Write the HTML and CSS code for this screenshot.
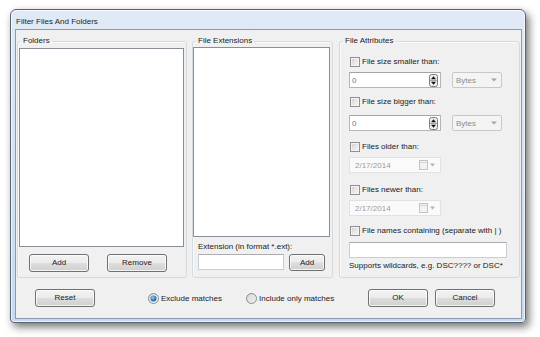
FILE: index.html
```html
<!DOCTYPE html>
<html>
<head>
<meta charset="utf-8">
<title>Filter Files And Folders</title>
<link rel="stylesheet" href="styles.css">
</head>
<body>
<div class="window">
  <div class="titlebar">Filter Files And Folders</div>
  <div class="client">
    <div class="groups">
      <fieldset class="group g-folders">
        <legend>Folders</legend>
        <div class="listbox lb-folders"></div>
        <div class="btnrow">
          <button class="btn b-add">Add</button>
          <button class="btn b-remove">Remove</button>
        </div>
      </fieldset>
      <fieldset class="group g-ext">
        <legend>File Extensions</legend>
        <div class="listbox lb-ext"></div>
        <div class="ext-label">Extension (in format *.ext):</div>
        <div class="ext-row">
          <div class="textbox tb-ext"></div>
          <button class="btn b-extadd">Add</button>
        </div>
      </fieldset>
      <fieldset class="group g-attr">
        <legend>File Attributes</legend>
        <div class="attr-body">
        <label class="check m9"><span class="cb"></span>File size smaller than:</label>
        <div class="size-row m4">
          <div class="numbox"><span class="numval">0</span>
            <svg class="spin" width="9" height="13" viewBox="0 0 9 13"><rect x="0.5" y="0.5" width="8" height="12" rx="2" fill="#ececec" stroke="#7c7c7c"/><line x1="1" y1="6.5" x2="8" y2="6.5" stroke="#a8a8a8"/><path d="M4.5 2.2 L7 5.2 H2 Z" fill="#111"/><path d="M2 7.8 H7 L4.5 10.8 Z" fill="#111"/></svg>
          </div>
          <div class="combo"><span>Bytes</span>
            <svg width="6" height="4" viewBox="0 0 6 4"><path d="M0 0.5 H6 L3 3.5 Z" fill="#a4a4a4"/></svg>
          </div>
        </div>
        <label class="check m8"><span class="cb"></span>File size bigger than:</label>
        <div class="size-row m7">
          <div class="numbox"><span class="numval">0</span>
            <svg class="spin" width="9" height="13" viewBox="0 0 9 13"><rect x="0.5" y="0.5" width="8" height="12" rx="2" fill="#ececec" stroke="#7c7c7c"/><line x1="1" y1="6.5" x2="8" y2="6.5" stroke="#a8a8a8"/><path d="M4.5 2.2 L7 5.2 H2 Z" fill="#111"/><path d="M2 7.8 H7 L4.5 10.8 Z" fill="#111"/></svg>
          </div>
          <div class="combo"><span>Bytes</span>
            <svg width="6" height="4" viewBox="0 0 6 4"><path d="M0 0.5 H6 L3 3.5 Z" fill="#a4a4a4"/></svg>
          </div>
        </div>
        <label class="check m10"><span class="cb"></span>Files older than:</label>
        <div class="datebox m4"><span>2/17/2014</span>
          <svg width="17" height="10" viewBox="0 0 17 10"><rect x="0.5" y="0.5" width="8" height="9" fill="#f2f2f2" stroke="#c4c4c4"/><line x1="1" y1="2.5" x2="8" y2="2.5" stroke="#d6d6d6"/><path d="M11 3.5 H16 L13.5 6.5 Z" fill="#b4b4b4"/></svg>
        </div>
        <label class="check m11"><span class="cb"></span>Files newer than:</label>
        <div class="datebox m4"><span>2/17/2014</span>
          <svg width="17" height="10" viewBox="0 0 17 10"><rect x="0.5" y="0.5" width="8" height="9" fill="#f2f2f2" stroke="#c4c4c4"/><line x1="1" y1="2.5" x2="8" y2="2.5" stroke="#d6d6d6"/><path d="M11 3.5 H16 L13.5 6.5 Z" fill="#b4b4b4"/></svg>
        </div>
        <label class="check m9"><span class="cb"></span>File names containing (separate with | )</label>
        <div class="textbox tb-names m5"></div>
        <div class="hint">Supports wildcards, e.g. DSC???? or DSC*</div>
        </div>
      </fieldset>
    </div>
    <div class="footer">
      <button class="btn b-reset">Reset</button>
      <label class="opt opt1">
        <svg width="11" height="11" viewBox="0 0 11 11"><defs><radialGradient id="rb" cx="0.4" cy="0.35" r="0.7"><stop offset="0" stop-color="#8fd0ff"/><stop offset="0.5" stop-color="#3b8ed8"/><stop offset="1" stop-color="#1b4f95"/></radialGradient><linearGradient id="rg1" x1="0" y1="0" x2="1" y2="1"><stop offset="0" stop-color="#d6d6d6"/><stop offset="1" stop-color="#fbfbfb"/></linearGradient></defs><circle cx="5.5" cy="5.5" r="5" fill="url(#rg1)" stroke="#8d8d8d"/><circle cx="5.5" cy="5.5" r="3" fill="url(#rb)"/></svg>
        <span>Exclude matches</span>
      </label>
      <label class="opt opt2">
        <svg width="11" height="11" viewBox="0 0 11 11"><defs><linearGradient id="rg2" x1="0" y1="0" x2="1" y2="1"><stop offset="0" stop-color="#cfcfcf"/><stop offset="1" stop-color="#f8f8f8"/></linearGradient></defs><circle cx="5.5" cy="5.5" r="5" fill="url(#rg2)" stroke="#8d8d8d"/><circle cx="5.5" cy="5.5" r="3.4" fill="#e4e4e4" opacity="0.7"/></svg>
        <span>Include only matches</span>
      </label>
      <button class="btn b-ok">OK</button>
      <button class="btn b-cancel">Cancel</button>
    </div>
  </div>
</div>
</body>
</html>
```

FILE: styles.css
```css
html, body {
  margin: 0;
  padding: 0;
}
body {
  width: 540px;
  height: 337px;
  overflow: hidden;
  background: #ffffff;
  font-family: "Liberation Sans", Arial, sans-serif;
  font-size: 8px;
  color: #1a1a1a;
}
.window {
  margin: 9px 0 0 10px;
  width: 516px;
  height: 314px;
  box-sizing: border-box;
  border: 1px solid #5a6470;
  border-radius: 6px 6px 4px 4px;
  background: linear-gradient(#e0eaf6 0%, #d5e3f3 40%, #c6daf0 100%);
  box-shadow: 3px 4px 9px rgba(0, 0, 0, 0.55), inset 0 0 0 1px rgba(255, 255, 255, 0.65);
  display: flex;
  flex-direction: column;
}
.titlebar {
  height: 19px;
  box-sizing: border-box;
  padding: 4px 0 0 5px;
  line-height: 16px;
  color: #1e1e1e;
}
.client {
  margin: 0 3px 0 4px;
  height: 290px;
  box-sizing: border-box;
  border: 1px solid #8c9cb0;
  background: #f0f0f0;
}
.groups {
  display: flex;
  padding: 5px 0 0 1px;
}
.group {
  margin: 0;
  padding: 0;
  min-width: 0;
  height: 243px;
  box-sizing: border-box;
  border: 1px solid #d3dbe0;
  border-radius: 3px;
  box-shadow: inset 1px 1px 0 #fbfbfb;
}
.group legend {
  margin-left: 3px;
  padding: 0 2px;
  line-height: 12px;
  font-size: 8px;
  color: #1a1a1a;
}
.g-folders {
  width: 170px;
  margin-right: 5px;
}
.g-ext {
  width: 141px;
  margin-right: 6px;
}
.g-attr {
  width: 181px;
}
.attr-body {
  padding-left: 9px;
}
.listbox {
  background: #fff;
  border: 1px solid #8a8e96;
  box-sizing: border-box;
}
.lb-folders {
  margin: 1px 0 0 1px;
  width: 165px;
  height: 199px;
}
.lb-ext {
  width: 137px;
  height: 190px;
}
.btnrow {
  display: flex;
  margin-top: 7px;
}
.btn {
  margin: 0;
  padding: 0;
  height: 18px;
  width: 60px;
  box-sizing: border-box;
  border: 1px solid #707070;
  border-radius: 3px;
  background: linear-gradient(#f3f3f3 0%, #ebebeb 48%, #dddddd 52%, #d0d0d0 100%);
  box-shadow: inset 0 0 0 1px rgba(255, 255, 255, 0.75);
  font-family: "Liberation Sans", Arial, sans-serif;
  font-size: 8px;
  color: #1a1a1a;
  line-height: 16px;
  text-align: center;
}
.b-add {
  margin-left: 11px;
}
.b-remove {
  margin-left: 18px;
}
.ext-label {
  margin-top: 4px;
  padding-left: 5px;
  line-height: 12px;
}
.ext-row {
  display: flex;
  margin-top: 1px;
  padding-left: 5px;
}
.textbox {
  background: #fff;
  border: 1px solid #c9ccd2;
  border-top-color: #abadb3;
  box-sizing: border-box;
  height: 16px;
}
.tb-ext {
  width: 86px;
}
.b-extadd {
  margin-left: 5px;
  width: 36px;
  height: 17px;
  line-height: 15px;
}
.check {
  display: flex;
  align-items: center;
  height: 12px;
  line-height: 12px;
  margin-left: 1px;
  white-space: nowrap;
}
.cb {
  width: 10px;
  height: 10px;
  box-sizing: border-box;
  border: 1px solid #8e8f8f;
  background: linear-gradient(135deg, #cdcdcd 0%, #e6e6e6 50%, #f7f7f7 100%);
  box-shadow: inset 0 0 0 1px #f3f3f3;
  margin-right: 2px;
  flex: none;
}
.m4 { margin-top: 4px; }
.m5 { margin-top: 5px; }
.m7 { margin-top: 7px; }
.m8 { margin-top: 8px; }
.m9 { margin-top: 9px; }
.m10 { margin-top: 10px; }
.m11 { margin-top: 11px; }
.size-row {
  display: flex;
}
.numbox {
  width: 92px;
  height: 16px;
  box-sizing: border-box;
  background: #fff;
  border: 1px solid #b4b6bb;
  border-top-color: #a2a4aa;
  display: flex;
  align-items: center;
  justify-content: space-between;
  padding: 0 2px 0 2px;
}
.numval {
  color: #7a7a7a;
}
.spin {
  display: block;
}
.combo {
  margin-left: 11px;
  width: 50px;
  height: 16px;
  box-sizing: border-box;
  background: #f4f4f4;
  border: 1px solid #c6c8cb;
  border-radius: 2px;
  display: flex;
  align-items: center;
  justify-content: space-between;
  padding: 0 4px 0 3px;
  color: #8d8d8d;
}
.combo svg {
  display: block;
}
.datebox {
  width: 92px;
  height: 16px;
  box-sizing: border-box;
  background: #fafafa;
  border: 1px solid #e2e2e2;
  display: flex;
  align-items: center;
  justify-content: space-between;
  padding: 0 4px 0 5px;
  color: #9a9a9a;
}
.datebox svg {
  display: block;
}
.tb-names {
  width: 158px;
}
.hint {
  margin-top: 3px;
  line-height: 10px;
  white-space: nowrap;
}
.footer {
  display: flex;
  align-items: center;
  padding-top: 11px;
}
.b-reset {
  margin-left: 19px;
}
.opt {
  display: flex;
  align-items: center;
  white-space: nowrap;
}
.opt svg {
  display: block;
  margin-right: 2px;
  flex: none;
}
.opt1 {
  margin-left: 53px;
  width: 98px;
}
.opt2 {
  width: 122px;
}
.b-cancel {
  margin-left: 7px;
}
```
